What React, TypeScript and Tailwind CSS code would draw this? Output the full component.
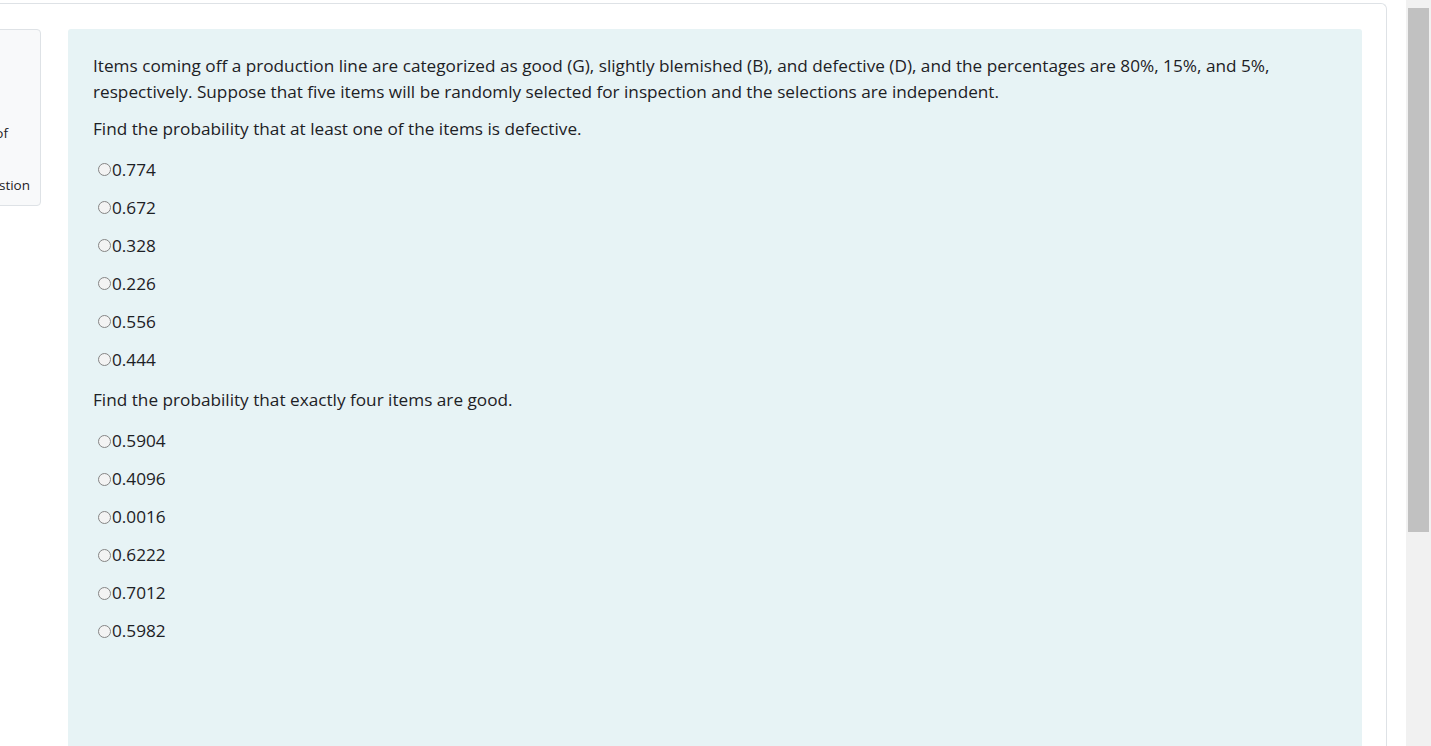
import React from "react";

const q1 = ["0.774", "0.672", "0.328", "0.226", "0.556", "0.444"];
const q2 = ["0.5904", "0.4096", "0.0016", "0.6222", "0.7012", "0.5982"];

function Option({ label }: { label: string }) {
  return (
    <div className="flex items-center h-[38px] pl-[5px]">
      <span className="shrink-0 inline-block w-[13px] h-[13px] rounded-full border border-[#858585] bg-[#f3f3f3] mr-[1px] mt-[-1px]" />
      <span>{label}</span>
    </div>
  );
}

export default function App() {
  return (
    <div
      className="w-[1431px] h-[746px] overflow-hidden bg-white flex"
      style={{ fontFamily: '"Open Sans", "Noto Sans", sans-serif' }}
    >
      <div className="flex-1 pt-[3px] pr-[19px]">
        <div className="h-full border-t border-r border-[#dee2e6] rounded-tr-[6px] pt-[25px] pr-[24px] flex">
          <div className="ml-[-100px] w-[141px] h-[177px] shrink-0 border border-[#dee2e6] rounded-[4px] bg-[#f8f9fa] text-[13.5px] text-[#1d2125] flex flex-col items-end">
            <div className="mt-[93px] pr-[32px] whitespace-nowrap">Marked out of</div>
            <div className="mt-[32px] pr-[10px] whitespace-nowrap">Flag question</div>
          </div>
          <div className="ml-[27px] flex-1 bg-[#e7f3f5] rounded-t-[3px] pl-[25px] pr-[25px] pt-[24px] text-[#1d2125] text-[17.2px] leading-[26.4px]">
            <p>
              Items coming off a production line are categorized as good (G), slightly blemished (B), and defective (D), and the percentages are 80%, 15%, and 5%,
              <br />
              respectively. Suppose that five items will be randomly selected for inspection and the selections are independent.
            </p>
            <p className="mt-[10px]">Find the probability that at least one of the items is defective.</p>
            <div className="mt-[9px]">
              {q1.map((o) => (
                <Option key={o} label={o} />
              ))}
            </div>
            <p className="mt-[8px]">Find the probability that exactly four items are good.</p>
            <div className="mt-[9px]">
              {q2.map((o) => (
                <Option key={o} label={o} />
              ))}
            </div>
          </div>
        </div>
      </div>
      <div className="w-[25px] h-full bg-[#f1f1f1] pt-[8px] pl-[2px] pr-[2px]">
        <div className="w-full h-[524px] bg-[#c1c1c1]" />
      </div>
    </div>
  );
}
